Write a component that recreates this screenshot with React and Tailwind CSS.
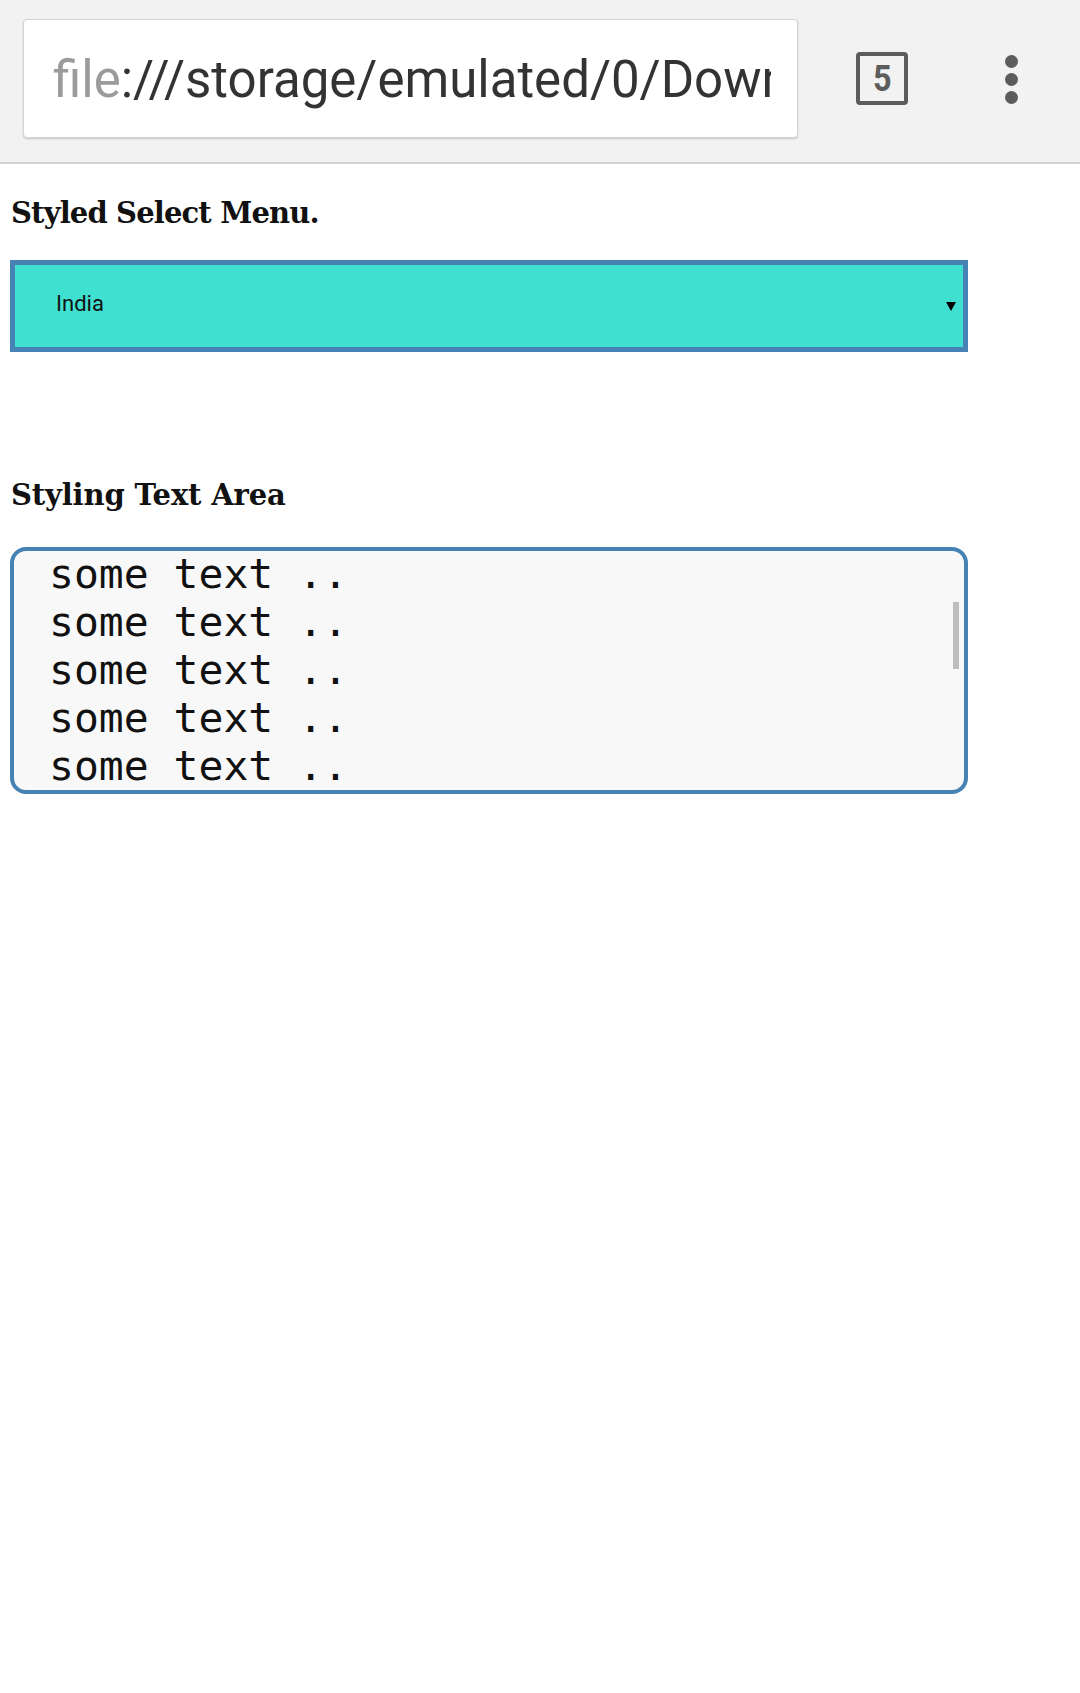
import React from "react";

export default function App() {
  const lines = Array.from({ length: 5 });
  return (
    <div className="w-[1080px] min-h-[1693px] bg-white">
      {/* Browser chrome */}
      <div className="h-[164px] bg-[#f2f2f2] border-b-2 border-[#d2d2d2] relative">
        <div className="absolute left-[23px] top-[19px] w-[775px] h-[119px] bg-white rounded-[4px] border border-[#d4d4d4] shadow-[0_1px_2px_rgba(0,0,0,0.18)] flex items-center pt-[3px]">
          <div
            className="ml-[29px] w-[718px] overflow-hidden whitespace-nowrap text-[51px] text-[#333333]"
            style={{ fontFamily: "Roboto, 'Liberation Sans', sans-serif" }}
          >
            <span className="text-[#9b9b9b]">file</span>:///storage/emulated/0/Download/index.html
          </div>
        </div>
        <div className="absolute left-[856px] top-[52px] w-[52px] h-[53px] border-[4px] border-[#5c5c5c] rounded-[4px] flex items-center justify-center">
          <span
            className="text-[36px] font-bold text-[#5c5c5c] leading-none scale-x-[0.9]"
            style={{ fontFamily: "Roboto, 'Liberation Sans', sans-serif" }}
          >
            5
          </span>
        </div>
        <div className="absolute left-[1005px] top-[55px] flex flex-col gap-[5px]">
          <div className="w-[13px] h-[13px] rounded-full bg-[#5c5c5c]" />
          <div className="w-[13px] h-[13px] rounded-full bg-[#5c5c5c]" />
          <div className="w-[13px] h-[13px] rounded-full bg-[#5c5c5c]" />
        </div>
      </div>

      {/* Page content */}
      <div className="pl-[10px]">
        <h3
          className="mt-[31px] ml-[1px] text-[29px] leading-[36px] font-bold text-[#111111] tracking-[-0.85px]"
          style={{ fontFamily: "'DejaVu Serif', 'Liberation Serif', serif" }}
        >
          Styled Select Menu.
        </h3>

        <div className="mt-[29px] w-[958px] h-[92px] border-[5px] border-[#4682b4] bg-[#40e0d0] flex items-center justify-between pb-[6px]">
          <span
            className="ml-[41px] text-[22px] text-[#111111]"
            style={{ fontFamily: "Roboto, 'Liberation Sans', sans-serif" }}
          >
            India
          </span>
          <svg width="10" height="10" viewBox="0 0 10 10" className="mr-[7px] mt-[6px]">
            <polygon points="0,1 10,1 5,10" fill="#000" />
          </svg>
        </div>

        <h3
          className="mt-[125px] ml-[1px] text-[29px] leading-[36px] font-bold text-[#111111] tracking-[-0.15px]"
          style={{ fontFamily: "'DejaVu Serif', 'Liberation Serif', serif" }}
        >
          Styling Text Area
        </h3>

        <div className="mt-[34px] relative w-[958px] h-[247px] border-[4px] border-[#4682b4] rounded-[16px] bg-[#f8f8f8] overflow-hidden">
          <div
            className="mt-[-1px] pl-[35px] text-[41.4px] leading-[48px] text-[#111111]"
            style={{ fontFamily: "'DejaVu Sans Mono', 'Liberation Mono', monospace" }}
          >
            {lines.map((_, i) => (
              <div key={i} className="whitespace-pre">some text ..</div>
            ))}
          </div>
          <div className="absolute right-[5px] top-[51px] w-[6px] h-[67px] bg-[#bdbdbd]" />
        </div>
      </div>
    </div>
  );
}
